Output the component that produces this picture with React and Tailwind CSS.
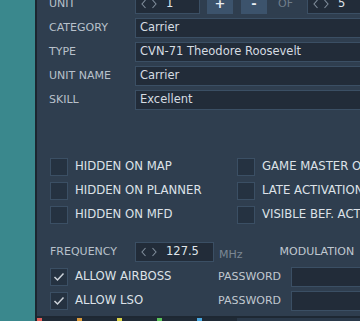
import React from "react";

const Chevrons = () => (
  <svg width="16" height="10" viewBox="0 0 16 10" className="shrink-0">
    <polyline points="4.5,1 1,5 4.5,9" fill="none" stroke="#7f8c9a" strokeWidth="1.1" />
    <polyline points="11.5,1 15,5 11.5,9" fill="none" stroke="#7f8c9a" strokeWidth="1.1" />
  </svg>
);

const Spin = ({ value, w }) => (
  <div className={`flex h-[20px] ${w} shrink-0 items-center border border-[#3b4f64] bg-[#222c39] pl-[5px]`}>
    <Chevrons />
    <span className="ml-[9px] text-[11.5px] text-[#dfe4e9]">{value}</span>
  </div>
);

const Field = ({ label, value }) => (
  <div className="mb-[4px] flex h-[20px] items-center">
    <div className="w-[86px] shrink-0 text-[11px] text-[#b8c1cb]">{label}</div>
    <div className="flex h-[20px] flex-1 items-center border border-[#3b4f64] border-r-0 bg-[#222c39] pl-[4px] text-[11.5px] text-[#d6dce2]">
      {value}
    </div>
  </div>
);

const Check = ({ checked }) => (
  <div className="flex h-[18px] w-[18px] shrink-0 items-center justify-center border border-[#3b4f64] bg-[#253241]">
    {checked && (
      <svg width="12" height="10" viewBox="0 0 12 10">
        <polyline points="1.5,5 4.5,8 10.5,1.5" fill="none" stroke="#cdd3da" strokeWidth="1.5" />
      </svg>
    )}
  </div>
);

const CB = ({ label, checked }) => (
  <div className="flex h-[18px] items-center">
    <Check checked={checked} />
    <span className="ml-[7px] whitespace-nowrap text-[11.7px] text-[#dde2e8]">{label}</span>
  </div>
);

export default function App() {
  return (
    <div
      className="flex h-[321px] w-[360px] overflow-hidden bg-[#2f3e4f]"
      style={{ fontFamily: '"DejaVu Sans", Verdana, sans-serif' }}
    >
      <div className="w-[35px] shrink-0 bg-[#3a888d]" />
      <div className="w-[2px] shrink-0 bg-[#1c2630]" />
      <div className="flex min-w-0 flex-1 flex-col">
        <div className="flex-1 pl-[12px]">
          {/* UNIT row */}
          <div className="mb-[4px] mt-[-6px] flex h-[20px] items-center">
            <div className="w-[86px] shrink-0 text-[11px] text-[#b8c1cb]">UNIT</div>
            <Spin value="1" w="w-[65px]" />
            <div className="ml-[7px] flex h-[20px] w-[26px] shrink-0 items-center justify-center bg-[#3c536c] text-[13px] font-bold text-[#e8edf2]">
              +
            </div>
            <div className="ml-[8px] flex h-[20px] w-[26px] shrink-0 items-center justify-center bg-[#3c536c] text-[13px] font-bold text-[#e8edf2]">
              -
            </div>
            <div className="ml-[11px] text-[11px] text-[#707d8a]">OF</div>
            <div className="ml-[14px] flex h-[20px] flex-1 items-center border border-r-0 border-[#3b4f64] bg-[#222c39] pl-[5px]">
              <Chevrons />
              <span className="ml-[9px] text-[11.5px] text-[#dfe4e9]">5</span>
            </div>
          </div>
          <Field label="CATEGORY" value="Carrier" />
          <Field label="TYPE" value="CVN-71 Theodore Roosevelt" />
          <Field label="UNIT NAME" value="Carrier" />
          <Field label="SKILL" value="Excellent" />

          {/* checkboxes */}
          <div className="ml-[1px] mt-[48px] grid grid-cols-[187px_1fr] gap-y-[6px]">
            <CB label="HIDDEN ON MAP" />
            <CB label="GAME MASTER ONLY" />
            <CB label="HIDDEN ON PLANNER" />
            <CB label="LATE ACTIVATION" />
            <CB label="HIDDEN ON MFD" />
            <CB label="VISIBLE BEF. ACTIVATION" />
          </div>

          {/* frequency */}
          <div className="ml-[1px] mt-[18px] flex h-[20px] items-center">
            <div className="w-[85px] shrink-0 text-[11px] text-[#b8c1cb]">FREQUENCY</div>
            <Spin value="127.5" w="w-[79px]" />
            <div className="ml-[5px] mt-[6px] text-[11px] text-[#7b8793]">MHz</div>
            <div className="ml-[37px] whitespace-nowrap text-[11px] text-[#c0c8d0]">MODULATION</div>
          </div>

          <div className="ml-[1px] mt-[5px] flex flex-col gap-[4px]">
            <div className="flex h-[20px] items-center">
              <div className="w-[168px] shrink-0">
                <CB label="ALLOW AIRBOSS" checked />
              </div>
              <div className="w-[73px] shrink-0 text-[11px] text-[#c0c8d0]">PASSWORD</div>
              <div className="h-[20px] flex-1 border border-r-0 border-[#3b4f64] bg-[#222c39]" />
            </div>
            <div className="flex h-[20px] items-center">
              <div className="w-[168px] shrink-0">
                <CB label="ALLOW LSO" checked />
              </div>
              <div className="w-[73px] shrink-0 text-[11px] text-[#c0c8d0]">PASSWORD</div>
              <div className="h-[20px] flex-1 border border-r-0 border-[#3b4f64] bg-[#222c39]" />
            </div>
          </div>
        </div>

        {/* bottom tab strip */}
        <div className="flex h-[5px] flex-col">
          <div className="h-[2px] bg-[#1e2833]" />
          <div className="flex h-[3px] bg-[#2a394a]">
            <div className="flex w-[40px] bg-[#1f2a36]"><div className="w-[5px] bg-[#e0605a]" /></div>
            <div className="flex w-[40px] bg-[#1f2a36]"><div className="w-[5px] bg-[#d99a3c]" /></div>
            <div className="flex w-[40px] bg-[#1f2a36]"><div className="w-[5px] bg-[#d8d24a]" /></div>
            <div className="flex w-[40px] bg-[#1f2a36]"><div className="w-[5px] bg-[#5cc35c]" /></div>
            <div className="flex w-[40px] bg-[#1f2a36]"><div className="w-[5px] bg-[#4aa8e0]" /></div>
          </div>
        </div>
      </div>
    </div>
  );
}
